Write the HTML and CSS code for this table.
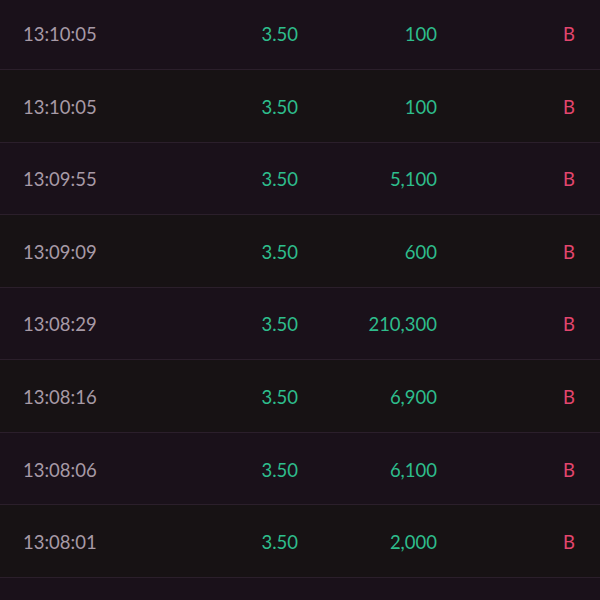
FILE: index.html
```html
<!DOCTYPE html>
<html>
<head>
<meta charset="utf-8">
<link rel="stylesheet" href="styles.css">
</head>
<body>
<div class="trades">
  <div class="row odd"><span class="time">13:10:05</span><span class="price">3.50</span><span class="qty">100</span><span class="side">B</span></div>
  <div class="row even"><span class="time">13:10:05</span><span class="price">3.50</span><span class="qty">100</span><span class="side">B</span></div>
  <div class="row odd"><span class="time">13:09:55</span><span class="price">3.50</span><span class="qty">5,100</span><span class="side">B</span></div>
  <div class="row even"><span class="time">13:09:09</span><span class="price">3.50</span><span class="qty">600</span><span class="side">B</span></div>
  <div class="row odd"><span class="time">13:08:29</span><span class="price">3.50</span><span class="qty">210,300</span><span class="side">B</span></div>
  <div class="row even"><span class="time">13:08:16</span><span class="price">3.50</span><span class="qty">6,900</span><span class="side">B</span></div>
  <div class="row odd"><span class="time">13:08:06</span><span class="price">3.50</span><span class="qty">6,100</span><span class="side">B</span></div>
  <div class="row even"><span class="time">13:08:01</span><span class="price">3.50</span><span class="qty">2,000</span><span class="side">B</span></div>
</div>
</body>
</html>
```
FILE: styles.css
```css
html, body {
  margin: 0;
  padding: 0;
  background: #1a111a;
  overflow: hidden;
}
body {
  font-family: Lato, "Open Sans", sans-serif;
  font-size: 18.5px;
}
.trades {
  margin-top: -2.6px;
}
.row {
  box-sizing: border-box;
  height: 72.57px;
  display: grid;
  grid-template-columns: 180px 95px 139px 138px;
  align-items: center;
  padding: 2px 25px 0 23px;
  border-bottom: 1px solid #2b1f2b;
}
.row.odd { background: #1a111a; }
.row.even { background: #171214; }
.time {
  color: #a79aa6;
  text-align: left;
}
.price, .qty {
  color: #2ebd8c;
  text-align: right;
}
.side {
  color: #e3466e;
  text-align: right;
}
```
